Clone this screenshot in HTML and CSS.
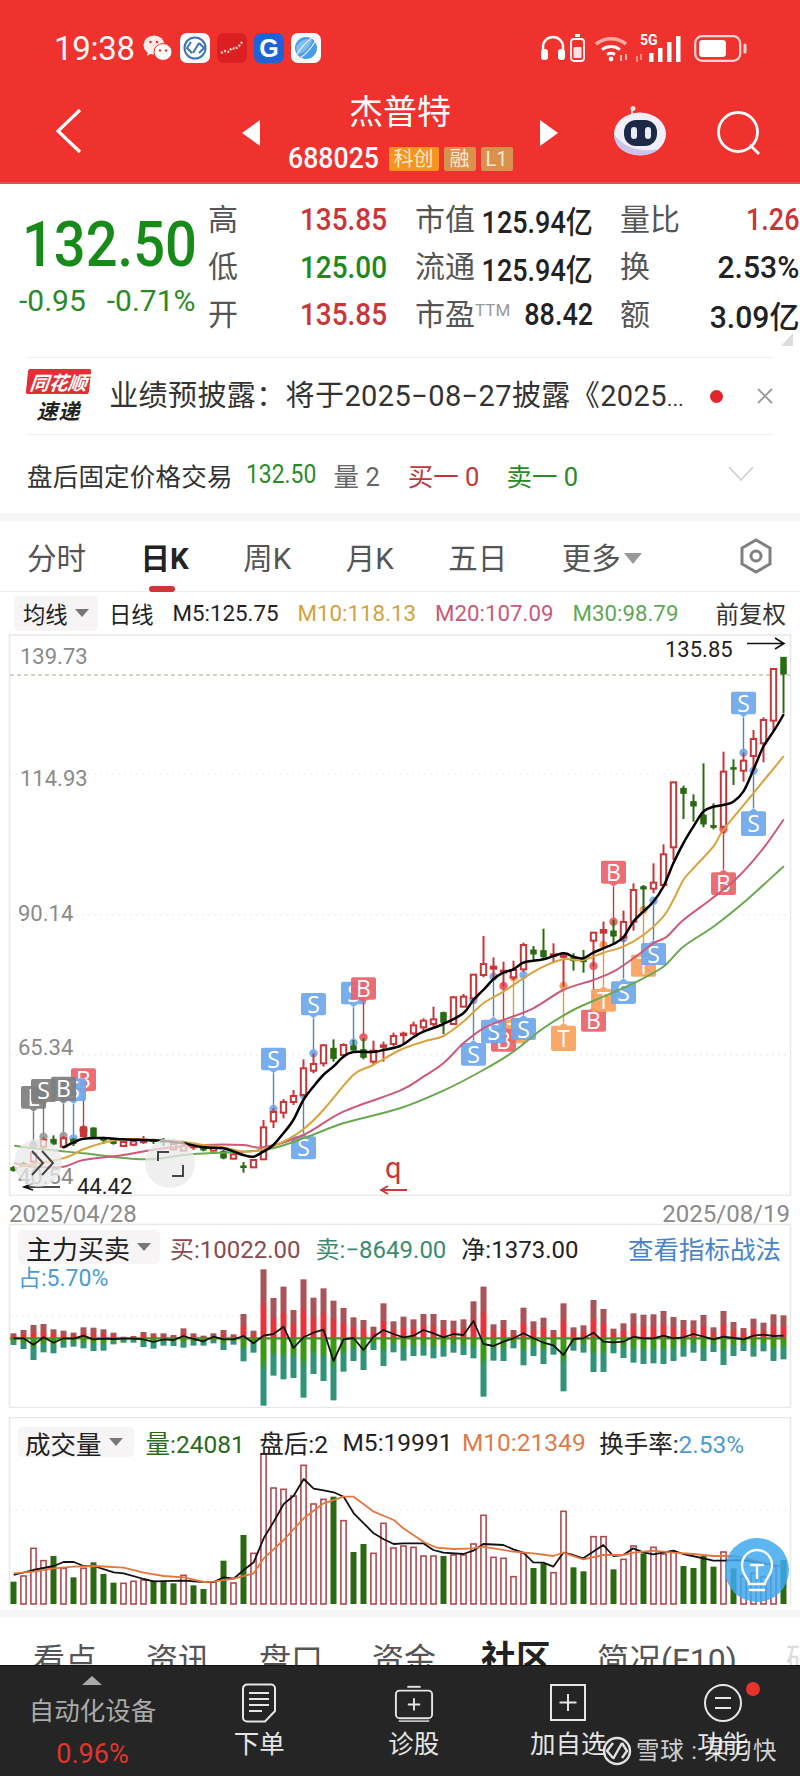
FILE: index.html
```html
<!DOCTYPE html>
<html lang="zh">
<head>
<meta charset="utf-8">
<title>杰普特 688025</title>
<link rel="stylesheet" href="styles.css">
</head>
<body>
<div class="page">
  <header class="head">
    <div class="status">
      <div class="status-left">
        <span class="time">19:38</span>
        <svg class="ic-wechat" viewBox="0 0 30 28"><ellipse cx="11" cy="11" rx="10.5" ry="9.5" fill="#fff" opacity=".9"/><path d="M5 17l-1 5 5-3z" fill="#fff" opacity=".9"/><ellipse cx="20" cy="18" rx="9" ry="8.4" fill="#fff" stroke="#ef322e"/><circle cx="7.500" cy="8" r="1.300" fill="#ef322e"/><circle cx="14" cy="8" r="1.300" fill="#ef322e"/><circle cx="17" cy="16.500" r="1.200" fill="#ef322e"/><circle cx="23" cy="16.500" r="1.200" fill="#ef322e"/></svg>
        <svg class="ic-app" viewBox="0 0 30 30"><rect width="30" height="30" rx="7" fill="#fff"/><circle cx="15" cy="15" r="10.500" fill="none" stroke="#3d73b5" stroke-width="2"/><path d="M11 9l-4 6 5 5M19 10l-6 10M19 10l5 5-5 5" fill="none" stroke="#3d73b5" stroke-width="2"/></svg>
        <svg class="ic-app" viewBox="0 0 30 30"><rect width="30" height="30" rx="7" fill="#dc1f22"/><path d="M4 20l4-2 3 1 4-4 3 1 4-3 4-5" fill="none" stroke="#f8cfc9" stroke-width="2.400" stroke-dasharray="2 1.500"/></svg>
        <svg class="ic-app" viewBox="0 0 30 30"><rect width="30" height="30" rx="7" fill="#1e62d8"/><text x="15" y="24" class="ic-g">G</text></svg>
        <svg class="ic-app" viewBox="0 0 30 30"><rect width="30" height="30" rx="7" fill="#fff"/><circle cx="15" cy="15" r="11" fill="#4b9be8"/><path d="M7 21C12 21 21 12 21 7c-6-3-14 1-16 8 0 2 1 4 2 6z" fill="#7fbcf0"/><ellipse cx="15" cy="15" rx="15" ry="3.500" fill="none" stroke="#e6f0fb" stroke-width="1.200" transform="rotate(-48 15 15)"/></svg>
      </div>
      <div class="status-right">
        <svg class="ic-phones" viewBox="0 0 26 26"><path d="M3 17v-5a10 10 0 0120 0v5" fill="none" stroke="#fff" stroke-width="2.400"/><rect x="1" y="14" width="7" height="11" rx="3" fill="#fff"/><rect x="18" y="14" width="7" height="11" rx="3" fill="#fff"/></svg>
        <svg class="ic-minibat" viewBox="0 0 15 28"><rect x="5" y="0" width="5" height="3" fill="#fff"/><rect x="1" y="5" width="13" height="22" rx="3" fill="none" stroke="#fff" stroke-width="1.800"/><rect x="3.500" y="13" width="8" height="11" rx="1" fill="#fff" opacity=".85"/></svg>
        <svg class="ic-wifi" viewBox="0 0 35 28"><path d="M1 10a24 24 0 0130 0" fill="none" stroke="#f9aaa5" stroke-width="3.600"/><path d="M7 15.500a15.500 15.500 0 0118 0" fill="none" stroke="#fff" stroke-width="3"/><path d="M12 20.500a7.500 7.500 0 018 0" fill="none" stroke="#fff" stroke-width="2.800"/><circle cx="16" cy="25" r="2.400" fill="#fff"/><path d="M26 21v6M31 20v6" stroke="#fbc6c2" stroke-width="1.800"/></svg>
        <div class="ic-net"><span class="net-5g">5G</span><svg class="ic-signal" viewBox="0 0 46 27"><path d="M1 21v6M5 19v6" stroke="#f9a5a0" stroke-width="1.500"/><rect x="13" y="18" width="4.500" height="9" fill="#fff"/><rect x="22" y="13" width="4.500" height="14" fill="#fff"/><rect x="31" y="7" width="4.500" height="20" fill="#fff"/><rect x="40" y="1" width="4.500" height="26" fill="#fff"/></svg></div>
        <svg class="ic-battery" viewBox="0 0 54 27"><rect x="1.200" y="1.200" width="45" height="24.600" rx="7" fill="none" stroke="#fbd5d3" stroke-width="2.200"/><rect x="5" y="5" width="27" height="17" rx="3.500" fill="#fff"/><rect x="49.500" y="8.500" width="3" height="10" rx="1.500" fill="#fbd5d3"/></svg>
      </div>
    </div>
    <nav class="nav">
      <div class="nav-left"><svg class="ic-back" viewBox="0 0 28 46"><path d="M25 2L3 23l22 21" fill="none" stroke="#fff" stroke-width="3.200"/></svg></div>
      <div class="nav-center">
        <svg class="tri" viewBox="0 0 18 26"><path d="M18 0v26L0 13z" fill="#fff"/></svg>
        <div class="nav-title">
          <div class="stock-name">杰普特</div>
          <div class="stock-code"><span class="code">688025</span><span class="badge badge-kc">科创</span><span class="badge badge-r">融</span><span class="badge badge-r">L1</span></div>
        </div>
        <svg class="tri" viewBox="0 0 18 26"><path d="M0 0v26l18-13z" fill="#fff"/></svg>
      </div>
      <div class="nav-right">
        <svg class="ic-robot" viewBox="0 0 54 50"><path d="M20 9c-2-3-1-6 1-7" fill="none" stroke="#f6dcdc" stroke-width="2"/><circle cx="20" cy="2.500" r="2.500" fill="#f8e4e4"/><ellipse cx="27" cy="28" rx="26" ry="21.500" fill="#f1effa"/><path d="M1 28c0 12 10 21 26 21 8 0 14-2 19-6-20 4-36-2-45-15z" fill="#c9c3ee"/><rect x="11" y="14" width="33" height="26" rx="12" fill="#1c2a48"/><rect x="18" y="21" width="6" height="12" rx="3" fill="#e8edf7"/><rect x="32" y="21" width="6" height="12" rx="3" fill="#e8edf7"/></svg>
        <svg class="ic-search" viewBox="0 0 46 44"><circle cx="22" cy="21" r="19.500" fill="none" stroke="#fff" stroke-width="2.800"/><path d="M34 34l9 9" stroke="#fff" stroke-width="2.800"/></svg>
      </div>
    </nav>
  </header>

  <section class="quote">
    <div class="quote-price">
      <div class="price">132.50</div>
      <div class="change"><span>-0.95</span><span>-0.71%</span></div>
    </div>
    <div class="quote-grid">
      <span class="lbl">高</span><span class="val up">135.85</span>
      <span class="pair"><span class="lbl">市值</span><span class="fig">125.94亿</span></span>
      <span class="pair"><span class="lbl">量比</span><span class="fig up">1.26</span></span>
      <span class="lbl">低</span><span class="val down">125.00</span>
      <span class="pair"><span class="lbl">流通</span><span class="fig">125.94亿</span></span>
      <span class="pair"><span class="lbl">换</span><span class="fig fig-wide">2.53%</span></span>
      <span class="lbl">开</span><span class="val up">135.85</span>
      <span class="pair"><span class="lbl">市盈<sup class="ttm">TTM</sup></span><span class="fig">88.42</span></span>
      <span class="pair"><span class="lbl">额</span><span class="fig fig-wide">3.09亿</span></span>
    </div>
    <svg class="quote-corner" viewBox="0 0 12 13"><path d="M12 0v13H0z" fill="#ddd"/></svg>
  </section>

  <section class="notice">
    <div class="flash"><div class="flash-tag">同花顺</div><div class="flash-sub">速递</div></div>
    <div class="notice-text">业绩预披露&#xFF1A;将于2025−08−27披露《2025<span class="dots">...</span></div>
    <span class="notice-dot"></span>
    <svg class="notice-close" viewBox="0 0 18 18"><path d="M2 2l14 14M16 2L2 16" stroke="#999" stroke-width="1.800"/></svg>
  </section>

  <section class="after">
    <span class="after-title">盘后固定价格交易</span>
    <span class="after-price">132.50</span>
    <span class="after-vol">量 2</span>
    <span class="after-buy">买一 0</span>
    <span class="after-sell">卖一 0</span>
    <svg class="after-more" viewBox="0 0 26 16"><path d="M1 1l12 13L25 1" fill="none" stroke="#d0d0d0" stroke-width="1.800"/></svg>
  </section>

  <div class="band"></div>

  <div class="tabs">
    <span class="tab">分时</span>
    <span class="tab tab-on">日K</span>
    <span class="tab">周K</span>
    <span class="tab">月K</span>
    <span class="tab">五日</span>
    <span class="tab tab-more">更多<i class="caret caret-lg"></i></span>
    <svg class="ic-hex" viewBox="0 0 34 36"><path d="M17 2l14 8v16l-14 8-14-8V10z" fill="none" stroke="#808080" stroke-width="3"/><circle cx="17" cy="18" r="5" fill="none" stroke="#808080" stroke-width="3"/></svg>
  </div>

  <div class="legend">
    <span class="pill">均线<i class="caret"></i></span>
    <span>日线</span>
    <span>M5:125.75</span>
    <span class="c-m10">M10:118.13</span>
    <span class="c-m20">M20:107.09</span>
    <span class="c-m30">M30:98.79</span>
    <span class="legend-end">前复权</span>
  </div>

  <svg id="kline" class="chart-main" viewBox="0 634 800 562"></svg>

  <div class="dates"><span>2025/04/28</span><span>2025/08/19</span></div>

  <section class="panel panel-flow">
    <svg id="flow" class="chart-flow" viewBox="0 1223 800 185"></svg>
    <div class="panel-legend">
      <div class="legend-row">
        <span class="pill pill-big">主力买卖<i class="caret"></i></span>
        <span class="c-buy"><b class="cj">买</b>:10022.00</span>
        <span class="c-sell"><b class="cj">卖</b>:−8649.00</span>
        <span><b class="cj">净</b>:1373.00</span>
        <span class="c-link">查看指标战法</span>
      </div>
      <div class="legend-share"><b class="cj">占</b>:5.70%</div>
    </div>
  </section>

  <section class="panel panel-vol">
    <svg id="vol" class="chart-vol" viewBox="0 1417 800 193"></svg>
    <div class="panel-legend">
      <div class="legend-row legend-row-vol">
        <span class="pill pill-vol">成交量<i class="caret"></i></span>
        <span class="c-vol"><b class="cj">量</b>:24081</span>
        <span><b class="cj">盘后</b>:2</span>
        <span>M5:19991</span>
        <span class="c-m10v">M10:21349</span>
        <span><b class="cj">换手率</b>:<span class="c-share">2.53%</span></span>
      </div>
    </div>
  </section>

  <div class="band band-low"></div>

  <div class="subtabs">
    <span>看点</span><span>资讯</span><span>盘口</span><span>资金</span><span class="subtab-on">社区</span><span>简况(F10)</span><span class="subtab-next">研报</span>
  </div>

  <footer class="bar">
    <div class="bar-sector">
      <i class="sector-up"></i>
      <span class="sector-name">自动化设备</span>
      <span class="sector-pct">0.96%</span>
    </div>
    <div class="bar-item">
      <svg class="bar-ic" viewBox="0 0 36 40"><path d="M6 1.500h24a4 4 0 014 4V28L24 38.500H6a4 4 0 01-4-4v-29a4 4 0 014-4z" fill="none" stroke="#e6e6e6" stroke-width="2"/><path d="M8 10h20M8 16h20M8 22h20M8 28h13" stroke="#e6e6e6" stroke-width="1.800"/></svg>
      <span>下单</span>
    </div>
    <div class="bar-item">
      <svg class="bar-ic" viewBox="0 0 42 40"><path d="M14 3h14" stroke="#e6e6e6" stroke-width="2"/><rect x="2" y="7" width="38" height="29" rx="4" fill="none" stroke="#e6e6e6" stroke-width="2"/><path d="M5 39h32" stroke="#e6e6e6" stroke-width="1.500"/><path d="M21 15v13M14.500 21.500h13" stroke="#e6e6e6" stroke-width="2"/></svg>
      <span>诊股</span>
    </div>
    <div class="bar-item">
      <svg class="bar-ic" viewBox="0 0 36 40"><rect x="1" y="2" width="34" height="35" fill="none" stroke="#e6e6e6" stroke-width="2"/><path d="M18 11v17M9.500 19.500h17" stroke="#e6e6e6" stroke-width="2"/></svg>
      <span>加自选</span>
    </div>
    <div class="bar-item">
      <svg class="bar-ic" viewBox="0 0 38 40"><circle cx="19" cy="20" r="18" fill="none" stroke="#e6e6e6" stroke-width="2"/><path d="M11 15h16M11 25h16" stroke="#e6e6e6" stroke-width="2"/></svg>
      <span>功能</span>
      <i class="bar-dot"></i>
    </div>
    <div class="watermark">
      <svg class="wm-logo" viewBox="0 0 30 30"><circle cx="15" cy="15" r="13" fill="none" stroke="#e2e2e2" stroke-width="2.400"/><path d="M11 7l-6 8 6 7M20 7l-9 16M20 7l5 8-5 7" fill="none" stroke="#e2e2e2" stroke-width="2.400"/></svg>
      <span>雪球 : 某刀快</span>
    </div>
  </footer>
</div>
<script src="chart.js"></script>
</body>
</html>
```

FILE: styles.css
```css
* { box-sizing: border-box; }
html, body { margin: 0; padding: 0; background: #fff; }
body { font-family: Roboto, "Noto Sans CJK SC", sans-serif; color: #222; }
.page { width: 800px; height: 1776px; overflow: hidden; position: relative; }
.cj { font-weight: 400; }

/* header */
.head { height: 184px; background: #ef322e; border-bottom: 2px solid #cf5a58; color: #fff; }
.status { height: 96px; display: flex; justify-content: space-between; align-items: center; padding: 0 52px 0 54px; }
.status-left { display: flex; align-items: center; gap: 7px; }
.time { font-size: 33px; width: 81px; letter-spacing: -.3px; margin-right: 1px; opacity: .96; }
.ic-wechat { width: 30px; height: 28px; }
.ic-app { width: 30px; height: 30px; }
.ic-g { font: 700 25px "Liberation Sans", sans-serif; fill: #fff; text-anchor: middle; }
.status-right { display: flex; align-items: center; gap: 4px; }
.ic-phones { width: 26px; height: 26px; }
.ic-minibat { width: 15px; height: 28px; margin-right: 6px; }
.ic-wifi { width: 35px; height: 28px; margin-right: 2px; }
.ic-net { position: relative; width: 48px; height: 28px; margin-right: 6px; }
.net-5g { position: absolute; left: 4px; top: -2px; font-size: 14px; font-weight: 700; }
.ic-signal { width: 46px; height: 27px; position: absolute; left: 0; top: 1px; }
.ic-battery { width: 54px; height: 27px; }

.nav { height: 86px; display: grid; grid-template-columns: 1fr 316px 1fr; }
.nav-left { padding: 12px 0 0 55px; }
.ic-back { width: 28px; height: 46px; display: block; }
.nav-center { display: flex; justify-content: space-between; align-items: flex-start; }
.tri { width: 18px; height: 26px; margin-top: 24px; }
.nav-title { display: flex; flex-direction: column; align-items: center; }
.stock-name { font-size: 34px; line-height: 32px; width: 102px; text-align: center; white-space: nowrap; }
.stock-code { display: flex; align-items: center; gap: 5px; margin-top: 18px; height: 25px; }
.code { font-size: 29px; font-weight: 500; width: 93px; display: inline-block; transform: scaleX(.92); transform-origin: left; margin-right: 3px; line-height: 25px; }
.badge { height: 24px; line-height: 24px; padding: 0 3px; font-size: 20px; border-radius: 2px; color: #fde8cf; text-align: center; }
.badge-kc { background: #f7941d; width: 50px; }
.badge-r { background: #d9914e; min-width: 32px; }
.nav-right { display: flex; justify-content: flex-end; gap: 49px; padding: 10px 38px 0 0; }
.ic-robot { width: 54px; height: 50px; }
.ic-search { width: 46px; height: 44px; margin-top: 5px; }

/* quote */
.quote { height: 173px; display: flex; padding-top: 12px; position: relative; }
.quote-price { width: 208px; padding: 25px 0 0 19px; }
.price { font-size: 63px; font-weight: 500; color: #178a19; line-height: 48px; margin-left: 3px; width: 172px; transform: scaleX(.89); transform-origin: left; white-space: nowrap; }
.change { display: flex; gap: 21px; font-size: 30px; line-height: 32px; color: #2a8a2a; margin-top: 16px; white-space: nowrap; }
.quote-grid { display: grid; grid-template-columns: 92px 115px 205px 179px; grid-auto-rows: 47.500px; align-items: center; font-size: 30px; }
.lbl { color: #555; font-size: 30px; line-height: 34px; white-space: nowrap; }
.val { font-size: 31px; font-weight: 500; display: inline-block; transform: scaleX(.9); transform-origin: left; white-space: nowrap; }
.up { color: #c8363a; }
.down { color: #1d8a1f; }
.pair { display: flex; justify-content: space-between; align-items: center; }
.pair:nth-child(4n+3) { padding-right: 27px; }
.fig { font-size: 31px; font-weight: 500; display: inline-block; transform: scaleX(.87); transform-origin: right; white-space: nowrap; color: #222; margin-left: -30px; }
.fig.up { color: #c8363a; }
.fig-wide { transform: scaleX(.97); }
.ttm { font-size: 17px; color: #999; line-height: 0; vertical-align: 9px; }
.quote-corner { position: absolute; right: 7px; bottom: 11px; width: 12px; height: 13px; }

/* notice */
.notice { height: 78px; margin: 0 26px; border-top: 1px solid #f0f0f0; border-bottom: 1px solid #f0f0f0; display: flex; align-items: center; }
.flash { width: 64px; margin-right: 19px; margin-left: 1px; text-align: center; font-style: italic; font-weight: 700; font-family: "Noto Sans CJK SC", sans-serif; }
.flash-tag { background: #e03036; color: #fff; font-size: 19px; line-height: 25px; height: 25px; border-radius: 2px; transform: skewX(-6deg); white-space: nowrap; }
.flash-sub { font-size: 21px; line-height: 27px; color: #222; margin-top: 3px; letter-spacing: 1px; }
.notice-text { font-size: 29px; width: 586px; white-space: nowrap; color: #333; overflow: hidden; line-height: 40px; height: 40px; letter-spacing: .4px; }
.dots { font-size: 20px; }
.notice-dot { width: 13px; height: 13px; border-radius: 50%; background: #e0262c; margin-left: 22px; flex: none; }
.notice-close { width: 18px; height: 18px; margin-left: 33px; flex: none; }

/* after hours */
.after { height: 78px; padding: 0 27px; display: flex; align-items: center; font-size: 25.500px; white-space: nowrap; }
.after-title { color: #333; margin-right: 13px; letter-spacing: .2px; }
.after-price { color: #2a8a2a; margin-right: 19px; width: 69px; display: inline-block; transform: scaleX(.88); transform-origin: left; font-size: 26px; }
.after-vol { color: #666; margin-right: 28px; }
.after-buy { color: #c0363a; margin-right: 27px; }
.after-sell { color: #2a8a2a; }
.after-more { width: 26px; height: 16px; margin-left: auto; margin-right: 19px; }

.band { height: 8px; background: #f6f6f6; }
.band-low { height: 7px; }

/* period tabs */
.tabs { height: 71px; border-bottom: 1px solid #eee; display: flex; align-items: center; gap: 54.500px; padding-left: 27px; position: relative; font-size: 29.500px; color: #555; }
.tab { position: relative; white-space: nowrap; }
.tab-on { color: #222; font-weight: 700; }
.tab-on::after { content: ""; position: absolute; left: 8px; bottom: -15px; width: 26px; height: 6px; border-radius: 3px; background: #d8313a; }
.tab-more { display: flex; align-items: center; }
.caret { display: inline-block; width: 0; height: 0; border-left: 7px solid transparent; border-right: 7px solid transparent; border-top: 8px solid #777; margin-left: 7px; }
.caret-lg { border-left-width: 9px; border-right-width: 9px; border-top: 11px solid #999; margin-left: 3px; margin-top: 4px; }
.ic-hex { width: 34px; height: 36px; position: absolute; left: 739px; top: 17px; }

/* legends */
.legend { height: 42px; display: flex; align-items: center; gap: 19px; padding: 0 14px; font-size: 22.300px; color: #222; white-space: nowrap; }
.pill { background: #f6f4f4; border-radius: 5px; height: 35px; padding: 0 9px; display: flex; align-items: center; margin-right: -8px; width: 84px; flex: none; }
.legend-end { margin-left: auto; color: #333; font-size: 23.500px; }
.c-m10 { color: #d3a23c; }
.c-m20 { color: #c85a78; }
.c-m30 { color: #5ea858; }

.chart-main { display: block; width: 800px; height: 562px; }
.dates { height: 27px; display: flex; justify-content: space-between; align-items: center; padding: 9px 10px 0 9px; font-size: 24px; color: #8a8a8a; }

/* indicator panels */
.panel { display: grid; width: 800px; }
.panel > * { grid-area: 1 / 1; }
.panel-flow { height: 185px; margin-bottom: 9px; }
.panel-vol { height: 193px; }
.chart-flow, .chart-vol { display: block; width: 800px; }
.chart-flow { height: 185px; }
.chart-vol { height: 193px; }
.panel-legend { padding: 7px 19px 0 18px; font-size: 24px; white-space: nowrap; }
.panel-vol .panel-legend { padding-top: 10px; }
.legend-row { display: flex; align-items: center; gap: 15px; height: 34px; }
.legend-row-vol { height: 30px; gap: 14.500px; font-size: 24.500px; }
.pill-big { font-size: 26px; height: 34px; padding: 0 8px; margin-right: -5px; width: 142px; color: #222; }
.pill-vol { font-size: 25.500px; height: 30px; padding: 0 7px; width: 116px; margin-right: -3px; color: #222; }
.c-buy { color: #8a4a4f; }
.c-sell { color: #3c8a70; }
.c-link { color: #4a84c8; font-size: 25.500px; margin-left: auto; }
.legend-share { color: #4a9bd4; font-size: 23px; line-height: 24px; margin-top: 3px; }
.c-vol { color: #2a6a1a; }
.c-m10v { color: #de7b4a; margin-left: -5px; margin-right: -1px; }
.c-share { color: #4a9bd4; }

/* chart drawing */
.frame { fill: none; stroke: #e8e8e8; stroke-width: 1.500; }
.grid { stroke: #e9e9e9; stroke-width: 1; stroke-dasharray: 2 4; }
.limit { stroke: #a8a88c; stroke-width: 1; stroke-dasharray: 4 3; }
.axis { font: 22px Roboto, sans-serif; fill: #8a8a8a; }
.mark { font: 22px Roboto, sans-serif; fill: #222; }
.arrow { fill: none; stroke: #111; stroke-width: 1.600; }
.arrow-red { fill: none; stroke: #c8383c; stroke-width: 1.800; }
.q { font: 29px Roboto, sans-serif; fill: #c8383c; }
.wick-h { stroke: #c8363a; stroke-width: 2; }
.body-h { fill: #fff; stroke: #c8363a; stroke-width: 2; }
.style-r { fill: #c8363a; }
.wick-g { stroke: #2a6a12; stroke-width: 2; }
.body-g { fill: #2a6a12; stroke: #2a6a12; stroke-width: 1; }
.ma { fill: none; stroke-linejoin: round; stroke-linecap: round; }
.ma5 { stroke: #000; stroke-width: 2.500; }
.ma10 { stroke: #d9a33b; stroke-width: 2; }
.ma20 { stroke: #cc5a78; stroke-width: 2; }
.ma30 { stroke: #6aa84f; stroke-width: 2; }
.flag-b .flag-box { fill: #e9636b; }
.flag-b .stem { stroke: #c8383c; }
.flag-b .dot { fill: #e9535b; }
.flag-s .flag-box { fill: #6ea8ec; }
.flag-s .stem { stroke: #4f86b5; }
.flag-s .dot { fill: #6ea8ec; }
.flag-t .flag-box { fill: #f9a15c; }
.flag-t .stem { stroke: #e39a48; }
.flag-t .dot { fill: #f2994a; }
.flag-k .flag-box { fill: #7f7f7f; }
.flag-k .stem { stroke: #777; }
.flag-k .dot { fill: #999; }
.stem { stroke-width: 1.400; }
.flag-text { font: 23px "Open Sans", sans-serif; fill: #fff; text-anchor: middle; }
.flag-box { opacity: .93; }
.dot { opacity: .9; }
.lens { fill: #e9e9e9; opacity: .75; }
.lens-ink { fill: none; stroke: #444; stroke-width: 2; }
.base { stroke: #4d8c22; stroke-width: 2.200; }
.line-k { fill: none; stroke: #111; stroke-width: 1.800; stroke-linejoin: round; }
.line-o { fill: none; stroke: #e5763f; stroke-width: 1.800; stroke-linejoin: round; }
.vol-h { fill: #fff; stroke: #b04a52; stroke-width: 1.600; }
.vol-g { fill: #2a6a12; }
.bulb-disc { fill: #3fa9f0; opacity: .85; }
.bulb-ink { fill: none; stroke: #fff; stroke-width: 2.400; stroke-linecap: round; opacity: .95; }

/* lower tabs */
.subtabs { height: 48px; overflow: hidden; display: flex; gap: 49px; padding: 26px 0 0 33px; font-size: 32px; line-height: 34px; color: #555; white-space: nowrap; }
.subtab-on { color: #222; font-weight: 700; font-size: 35px; width: 70px; margin-left: -4px; margin-right: -3px; }
.subtab-next { color: #ddd; }

/* bottom bar */
.bar { height: 111px; background: #252525; border-top: 1px solid #111; display: grid; grid-template-columns: 182px repeat(4, 154.500px); position: relative; color: #e6e6e6; }
.bar-sector { display: flex; flex-direction: column; align-items: center; padding-left: 3px; position: relative; padding-top: 30px; }
.sector-up { position: absolute; left: 82px; top: 10px; width: 0; height: 0; border-left: 10px solid transparent; border-right: 10px solid transparent; border-bottom: 9px solid #aaa; }
.sector-name { font-size: 25.500px; line-height: 30px; color: #aaa; white-space: nowrap; }
.sector-pct { font-size: 27px; line-height: 30px; color: #e0352e; margin-top: 13px; }
.bar-item { display: flex; flex-direction: column; align-items: center; padding-top: 17px; position: relative; font-size: 25.500px; line-height: 30px; }
.bar-ic { width: 40px; height: 40px; display: block; margin-bottom: 6px; }
.bar-dot { position: absolute; left: 100px; top: 16px; width: 14px; height: 14px; border-radius: 50%; background: #e8322e; }
.watermark { position: absolute; left: 602px; top: 70px; display: flex; align-items: center; gap: 4px; font-size: 23.500px; line-height: 30px; color: rgba(255,255,255,.8); white-space: nowrap; letter-spacing: .8px; }
.wm-logo { width: 30px; height: 30px; }
```

FILE: chart.js
```js
(function () {
  var SVG = {
    kline: document.getElementById('kline'),
    flow: document.getElementById('flow'),
    vol: document.getElementById('vol')
  };
  var barX = function (i) { return 13.5 + 10 * i; };
  var Ymain = function (z) { return 900 + z / 3; };

  // Smooth a list of [x, y] points with Catmull-Rom segments.
  function smooth(p) {
    var d = 'M' + p[0][0].toFixed(1) + ' ' + p[0][1].toFixed(1);
    for (var i = 0; i < p.length - 1; i++) {
      var a = p[i - 1] || p[i], b = p[i], c = p[i + 1], e = p[i + 2] || c;
      d += 'C' + (b[0] + (c[0] - a[0]) / 6).toFixed(1) + ' ' + (b[1] + (c[1] - a[1]) / 6).toFixed(1) +
        ' ' + (c[0] - (e[0] - b[0]) / 6).toFixed(1) + ' ' + (c[1] - (e[1] - b[1]) / 6).toFixed(1) +
        ' ' + c[0].toFixed(1) + ' ' + c[1].toFixed(1);
    }
    return d;
  }
  // Flat [u, z, u, z...] lists, u being 3x page x; second list is offset by 400px.
  function pts(left, right, yf) {
    var out = [], i;
    for (i = 0; i < left.length; i += 2) out.push([left[i] / 3, yf(left[i + 1])]);
    for (i = 0; i < right.length; i += 2) out.push([400 + right[i] / 3, yf(right[i + 1])]);
    return out;
  }

  /* ---------- K line ---------- */
  // type, body top, body bottom, wick top, wick bottom (3x units, 0 = y 900)
  var K = [
    ['g',803,811,798,815],['g',790,795,785,800],['h',760,785,755,790],['h',720,740,712,745],
    ['g',718,732,706,736],['h',715,740,708,744],['g',718,730,714,738],['r',682,708,676,712],
    ['g',684,712,682,714],['g',716,720,710,732],['g',718,730,716,734],['h',726,738,722,740],
    ['h',724,734,720,738],['r',722,725,708,732],['g',720,724,716,732],['g',722,726,714,738],
    ['h',732,748,728,752],['h',738,752,734,754],['r',736,742,730,750],['g',740,750,734,754],
    ['h',742,752,736,754],['g',754,774,750,778],['h',763,776,760,778],['g',798,801,786,818],
    ['h',780,802,778,804],['h',682,778,660,780],['h',636,664,625,684],['h',606,638,597,655],
    ['h',588,606,570,615],['h',505,585,478,590],['h',492,512,460,520],['h',436,490,432,500],
    ['g',445,475,418,485],['h',435,465,430,475],['g',438,450,420,452],['g',449,472,415,478],
    ['h',452,485,422,495],['r',436,440,425,485],['h',408,432,398,438],['r',401,405,395,435],
    ['h',376,400,365,405],['h',362,382,355,392],['h',358,372,320,380],['g',338,367,335,402],
    ['h',292,372,288,375],['h',290,320,282,322],['h',224,295,222,310],['h',192,225,108,232],
    ['r',200,206,172,240],['r',212,218,185,260],['h',210,232,182,240],['h',135,208,128,215],
    ['g',150,162,138,185],['g',152,170,86,178],['r',163,167,130,188],['r',166,170,165,260],
    ['g',172,182,160,212],['g',176,185,150,218],['h',98,122,98,200],['r',90,98,65,140],
    ['g',93,108,60,135],['h',66,112,32,125],['h',-30,65,-50,92],['g',-40,-33,-45,30],
    ['h',-52,-34,-110,-20],['h',-137,-45,-167,-40],['h',-353,-158,-353,-120],['g',-335,-320,-343,-243],
    ['g',-295,-282,-317,-235],['g',-255,-228,-410,-218],['g',-223,-218,-290,-212],['h',-385,-220,-445,-200],
    ['g',-397,-393,-422,-345],['h',-418,-388,-442,-355],['h',-483,-432,-510,-390],['h',-540,-470,-548,-413],
    ['h',-693,-538,-693,-505],['g',-728,-678,-728,-560]
  ];

  var MA = {
    ma30: pts([45,737,100,745,250,760,430,778,580,762,790,750,910,715,1030,670],
      [0,625,130,572,250,510,340,455,430,385,520,330,610,290,700,250,790,200,850,140,940,80,1040,0,1150,-100], Ymain),
    ma20: pts([45,790,100,800,190,800,250,780,370,765,490,745,610,735,730,735,790,742,910,705,1030,635],
      [0,572,70,530,130,490,190,430,250,385,310,360,400,325,490,270,580,240,640,215,700,175,760,130,800,110,850,60,930,0,1010,-65,1090,-155,1150,-240], Ymain),
    ma10: pts([60,800,190,775,250,748,310,728,370,718,430,718,490,722,550,725,610,735,670,742,730,755,790,748,850,725,910,688,970,630,1060,525,1120,495],
      [0,450,70,425,130,408,190,365,250,310,310,275,370,235,430,200,490,178,550,180,610,158,670,140,730,105,790,50,820,0,850,-60,880,-95,940,-160,970,-210,1060,-320,1150,-430], Ymain),
    ma5: pts([190,742,220,728,250,716,310,714,370,718,430,720,490,722,550,730,610,742,670,745,730,765,760,770,790,755,820,735,850,700,880,660,910,600,940,560,970,525,1000,500,1030,470,1060,456,1120,456,1150,450],
      [0,438,40,412,70,395,130,372,190,340,220,300,250,270,280,238,310,218,340,208,370,188,400,182,430,178,490,160,520,170,550,175,580,158,610,145,640,132,670,112,700,65,730,35,760,5,790,-40,820,-110,850,-170,880,-220,910,-265,940,-280,970,-285,1000,-295,1030,-325,1060,-390,1090,-460,1120,-505,1150,-555], Ymain)
  };

  // kind, letter, x (page), box top, box bottom, dot (3x units)
  var F = [
    ['k','L',33.5,558,635,735],['k','S',43.5,537,615,710],
    ['b','B',83.5,505,582,690],['s','S',73.5,535,612,715],['k','B',63.5,530,612,708],
    ['s','S',273.5,443,520,627],['s','S',313.5,279,355,460],['s','S',353.5,245,322,428],['b','B',363.5,232,308,412],
    ['s','S',303.5,700,778,585],
    ['s','S',473.5,420,497,300],['t','T',513.5,350,430,232],['b','B',503.5,378,455,258],['s','S',493.5,350,430,230],['s','S',523.5,345,420,225],
    ['t','T',563.5,368,453,258],['b','B',593.5,320,395,198],['t','T',603.5,258,335,135],['s','S',623.5,235,312,115],
    ['t','T',643.5,155,230,30],['s','S',653.5,120,195,2],
    ['b','B',613.5,-118,-40,65],['s','S',743.5,-625,-548,-442],['s','S',753.5,-275,-192,-388],['b','B',723.5,-92,-15,-212]
  ];

  function flag(f) {
    var x = f[2], top = Ymain(f[3]), bot = Ymain(f[4]), dot = Ymain(f[5]);
    var up = dot > bot;          // flag sits above its dot
    var w = 12.5, d, s;
    if (up) {
      d = 'M' + (x - w) + ' ' + (top + 2) + 'q0-2 2-2h' + (2 * w - 4) + 'q2 0 2 2V' + (bot - 5) + 'q0 2-2 2H' + (x + 4) + 'L' + x + ' ' + bot + 'L' + (x - 4) + ' ' + (bot - 3) + 'H' + (x - w + 2) + 'q-2 0-2-2z';
      s = [bot, dot];
    } else {
      d = 'M' + (x - w) + ' ' + (top + 5) + 'q0-2 2-2H' + (x - 4) + 'L' + x + ' ' + top + 'L' + (x + 4) + ' ' + (top + 3) + 'H' + (x + w - 2) + 'q2 0 2 2V' + (bot - 2) + 'q0 2-2 2H' + (x - w + 2) + 'q-2 0-2-2z';
      s = [dot, top];
    }
    var cy = up ? (top + bot - 3) / 2 : (top + bot + 3) / 2;
    return '<g class="flag-' + f[0] + '"><line class="stem" x1="' + x + '" x2="' + x + '" y1="' + s[0] + '" y2="' + s[1] + '"/>' +
      '<circle class="dot" cx="' + x + '" cy="' + dot + '" r="4.2"/>' +
      '<path class="flag-box" d="' + d + '"/>' +
      '<text class="flag-text" x="' + x + '" y="' + (cy + 8.5) + '">' + f[1] + '</text></g>';
  }

  function candle(c, i) {
    var x = barX(i), kind = c[0] === 'g' ? 'g' : 'h';
    var t = Ymain(c[1]), b = Ymain(c[2]), wt = Ymain(c[3]), wb = Ymain(c[4]);
    var fill = c[0] === 'r' ? ' style-r' : '';
    return '<line class="wick-' + kind + '" x1="' + x + '" x2="' + x + '" y1="' + wt + '" y2="' + wb + '"/>' +
      '<rect class="body-' + kind + fill + '" x="' + (x - 2.7) + '" y="' + t + '" width="5.4" height="' + Math.max(b - t, 1.5) + '"/>';
  }

  var h = '';
  h += '<path class="frame" d="M9.500 1195.500V635H790.500V1195.500H9.500"/>';
  [774, 915, 1055].forEach(function (y) { h += '<line class="grid" x1="10" x2="790" y1="' + y + '" y2="' + y + '"/>'; });
  h += '<line class="limit" x1="10" x2="790" y1="675" y2="675"/>';
  [['139.73', 20, 664], ['114.93', 20, 786], ['90.14', 18, 921], ['65.34', 18, 1055], ['40.54', 18, 1184]].forEach(function (a) {
    h += '<text class="axis" x="' + a[1] + '" y="' + a[2] + '">' + a[0] + '</text>';
  });
  h += F.map(flag).join('');
  h += K.map(candle).join('');
  ['ma30', 'ma20', 'ma10', 'ma5'].forEach(function (k) { h += '<path class="ma ' + k + '" d="' + smooth(MA[k]) + '"/>'; });
  h += '<text class="mark" x="665" y="657">135.85</text><path class="arrow" d="M747 643.500h37m-9-5.500l9 5.500-9 5.500"/>';
  h += '<text class="mark" x="77" y="1194">44.42</text><path class="arrow" d="M60 1187H24m9-3.500l-9 3.500 9 3"/>';
  h += '<text class="q" x="385" y="1178">q</text><path class="arrow-red" d="M407 1190H381m7-4l-7 4 7 4"/>';
  h += '<circle class="lens" cx="38" cy="1163" r="24"/><path class="lens-ink" d="M32 1151l11 12-11 12M42 1151l11 12-11 12"/>';
  h += '<circle class="lens" cx="170" cy="1163" r="25"/><path class="lens-ink" d="M158 1161v-9h11M183 1165v11h-11"/>';
  SVG.kline.innerHTML = h;

  /* ---------- money flow ---------- */
  var UP = [340,330,315,312,328,332,338,322,323,328,338,350,348,336,340,340,345,325,340,347,340,330,343,282,332,148,234,200,270,178,233,205,242,264,292,300,320,250,304,290,298,282,282,300,302,298,244,200,313,300,330,263,304,293,330,250,322,316,240,267,326,310,280,284,283,273,291,300,301,285,322,273,306,324,296,308,283,286];
  var DOWN = [375,387,420,397,400,383,380,385,393,392,373,368,368,381,386,377,378,383,377,377,370,390,374,424,398,557,467,478,474,533,462,483,541,455,423,450,390,438,397,422,408,407,415,410,398,405,415,530,422,423,385,436,408,432,404,514,392,398,456,456,400,414,428,432,430,432,423,410,398,423,396,435,408,393,410,394,423,418];
  var NET = [355,355,374,352,368,355,356,347,358,356,357,356,356,358,366,358,360,348,357,364,350,358,358,348,370,347,342,320,384,352,338,329,423,358,354,390,350,330,342,352,347,330,340,352,342,345,303,372,378,365,355,340,355,368,376,405,357,355,338,365,367,365,350,355,355,347,355,352,342,350,358,350,354,358,347,344,348,347];
  var Yflow = function (z) { return 1220 + z / 3; };
  var base = Yflow(355);
  var g = '<defs><linearGradient id="gUp" x1="0" y1="0" x2="0" y2="1"><stop offset=".42" stop-color="#a85458"/><stop offset=".58" stop-color="#e8333a"/></linearGradient>' +
    '<linearGradient id="gDn" x1="0" y1="0" x2="0" y2="1"><stop offset=".32" stop-color="#3a9a14"/><stop offset=".5" stop-color="#2f9478"/></linearGradient></defs>';
  g += '<path class="frame" d="M9.500 1224.500H790.500V1407.500H9.500z"/>';
  g += '<line class="grid" x1="10" x2="790" y1="1316" y2="1316"/>';
  UP.forEach(function (u, i) {
    var x = barX(i) - 3;
    g += '<rect x="' + x + '" y="' + Yflow(u) + '" width="6" height="' + (base - Yflow(u)) + '" fill="url(#gUp)"/>';
    g += '<rect x="' + x + '" y="' + base + '" width="6" height="' + (Yflow(DOWN[i]) - base) + '" fill="url(#gDn)"/>';
  });
  g += '<line class="base" x1="10" x2="786" y1="' + base + '" y2="' + base + '"/>';
  g += '<polyline class="line-k" points="' + NET.map(function (z, i) { return barX(i) + ',' + Yflow(z).toFixed(1); }).join(' ') + '"/>';
  SVG.flow.innerHTML = g;

  /* ---------- volume ---------- */
  var V = [['g',455],['h',438],['h',355],['h',392],['g',378],['h',415],['g',442],['h',415],['g',397],['g',432],['g',458],['h',460],['h',454],['h',450],['g',452],['g',452],['g',460],['h',436],['g',466],['g',477],['h',456],['g',392],['h',459],['g',315],['h',370],['h',72],['h',174],['h',178],['h',198],['h',106],['h',222],['h',208],['g',200],['h',272],['g',366],['g',342],['h',370],['h',280],['h',354],
    ['h',348],['h',352],['h',378],['h',378],['g',378],['h',375],['h',375],['h',342],['h',256],['h',382],['h',385],['h',440],['h',370],['g',414],['g',400],['h',428],['h',244],['g',412],['g',424],['h',320],['h',320],['g',418],['h',388],['h',348],['g',370],['h',352],['h',372],['h',365],['g',408],['g',414],['g',378],['g',410],['h',366],['g',415],['h',438],['h',430],['h',440],['h',410],['g',390]];
  var Yvol = function (z) { return 1430 + z / 3; };
  var vb = Yvol(522);
  var v = '<path class="frame" d="M9.500 1605V1417.500H790.500V1605"/>';
  v += '<line class="grid" x1="10" x2="790" y1="1510" y2="1510"/>';
  V.forEach(function (b, i) {
    var t = Yvol(b[1]), x = barX(i);
    if (b[0] === 'g') v += '<rect class="vol-g" x="' + (x - 3) + '" y="' + t + '" width="6" height="' + (vb - t) + '"/>';
    else v += '<rect class="vol-h" x="' + (x - 2.6) + '" y="' + t + '" width="5.2" height="' + (vb - t) + '"/>';
  });
  var black = pts([41,435,100,420,161,408,191,396,221,396,251,408,281,408,341,427,371,430,431,447,461,454,551,452,611,456,641,456,671,442,701,446,731,420,761,397,791,325,821,275,851,222,881,197,911,147,941,176,971,181,1001,187,1031,200,1061,250,1091,280,1121,310,1151,328,1181,342],
    [10,340,70,340,100,360,130,368,190,372,220,362,250,342,310,345,340,358,370,368,400,397,430,398,460,410,490,368,520,375,550,385,610,345,640,378,670,375,700,355,730,367,760,373,820,362,850,372,910,385,940,392,980,392,1030,390,1150,410], Yvol);
  var orange = pts([41,430,100,425,161,415,221,410,281,408,371,413,431,428,491,438,551,442,611,456,641,455,701,446,761,430,791,385,851,330,911,265,971,220,1031,200,1061,200,1121,245,1181,270],
    [10,295,70,335,110,353,160,357,220,355,250,350,340,365,400,370,460,378,490,368,550,388,610,375,670,375,700,368,760,362,820,368,880,372,940,378,1000,378,1150,410], Yvol);
  var poly = function (p) { return p.map(function (q) { return q[0].toFixed(1) + ',' + q[1].toFixed(1); }).join(' '); };
  v += '<polyline class="line-k" points="' + poly(black) + '"/><polyline class="line-o" points="' + poly(orange) + '"/>';
  v += '<circle class="bulb-disc" cx="757" cy="1570" r="32"/>';
  v += '<path class="bulb-ink" d="M749 1584c0-6-7-8-7-19a15 15 0 0130 0c0 11-7 13-7 19z"/><path class="bulb-ink" d="M750 1590h14M751 1565h12M757 1565v13"/>';
  SVG.vol.innerHTML = v;
})();
```
